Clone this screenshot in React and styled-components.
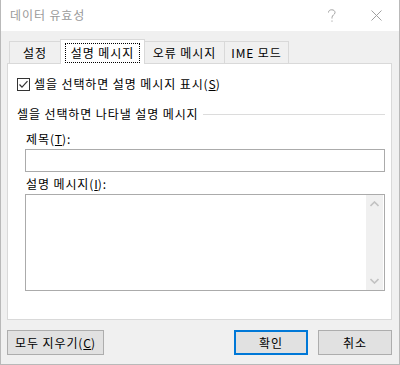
import styled, { createGlobalStyle } from "styled-components"

const GlobalStyle = createGlobalStyle`
    html, body {
        margin: 0;
        padding: 0;
        background: #ffffff;
    }
    body {
        font-family: "Noto Sans CJK KR", "Noto Sans", "Liberation Sans", sans-serif;
        font-size: 12px;
        letter-spacing: 0.9px;
        color: #000;
    }
`

const Window = styled.div`
    width: 400px;
    height: 365px;
    box-sizing: border-box;
    border: 1px solid #b9b9b9;
    border-top: none;
    display: flex;
    flex-direction: column;
    background: #f0f0f0;
`

const TitleBar = styled.div`
    height: 31px;
    background: #ffffff;
    display: flex;
    align-items: center;
    padding-left: 9px;
`

const Title = styled.div`
    flex: 1;
    color: #999999;
    font-size: 12px;
    line-height: 16px;
    margin-top: -2px;
`

const TitleButton = styled.div`
    width: 45px;
    height: 31px;
    display: flex;
    align-items: center;
    justify-content: center;
    color: #a0a0a0;
`

const Body = styled.div`
    flex: 1;
    display: flex;
    flex-direction: column;
    padding: 8px 7px 0 6px;
`

const TabStrip = styled.div`
    display: flex;
    align-items: flex-end;
    padding-left: 2px;
    height: 24px;
`

const Tab = styled.div`
    box-sizing: border-box;
    width: ${p => p.$w}px;
    height: ${p => (p.$active ? 25 : 22)}px;
    margin-left: ${p => (p.$first ? 0 : -1)}px;
    margin-bottom: ${p => (p.$active ? -1 : 0)}px;
    border: 1px solid #d9d9d9;
    border-bottom: none;
    background: ${p => (p.$active ? "#ffffff" : "#f0f0f0")};
    position: relative;
    z-index: ${p => (p.$active ? 1 : 0)};
    display: flex;
    align-items: ${p => (p.$active ? "flex-start" : "center")};
    justify-content: center;
    line-height: 16px;
    white-space: nowrap;
`

const FocusBox = styled.span`
    box-sizing: border-box;
    margin-top: 3px;
    width: 75px;
    height: 20px;
    border: 1px dotted #000;
    display: flex;
    align-items: center;
    justify-content: center;
`

const Panel = styled.div`
    box-sizing: border-box;
    height: 257px;
    background: #ffffff;
    border: 1px solid #d9d9d9;
    display: flex;
    flex-direction: column;
    padding: 0 6px 0 9px;
`

const CheckRow = styled.label`
    display: flex;
    align-items: center;
    margin-top: 13px;
    height: 14px;
    line-height: 16px;
`

const CheckBox = styled.span`
    box-sizing: border-box;
    width: 13px;
    height: 13px;
    border: 1px solid #333;
    margin-right: 4px;
    display: flex;
    align-items: center;
    justify-content: center;
`

const GroupHeader = styled.div`
    display: flex;
    align-items: center;
    margin-top: 15px;
    line-height: 16px;
    height: 16px;
`

const GroupLine = styled.div`
    flex: 1;
    height: 1px;
    background: #dcdcdc;
    margin-left: 4px;
`

const FieldLabel = styled.div`
    margin-left: 9px;
    margin-top: ${p => p.$top}px;
    line-height: 16px;
    height: 16px;
`

const TextBox = styled.div`
    box-sizing: border-box;
    margin: 2px 0 0 8px;
    height: ${p => p.$h}px;
    border: 1px solid #ababab;
    background: #ffffff;
    display: flex;
    justify-content: flex-end;
`

const ScrollBar = styled.div`
    width: 17px;
    margin: 0 1px 0 0;
    background: #f0f0f0;
    display: flex;
    flex-direction: column;
    justify-content: space-between;
    align-items: center;
    padding: 6px 0;
`

const Mn = styled.u`
    text-decoration: underline;
    text-underline-offset: 1px;
    letter-spacing: 0;
`

const ButtonRow = styled.div`
    display: flex;
    align-items: center;
    margin-top: 10px;
    gap: 10px;
`

const Button = styled.div`
    box-sizing: border-box;
    width: ${p => p.$w}px;
    height: 25px;
    background: #e1e1e1;
    border: ${p => (p.$default ? "2px solid #0078d7" : "1px solid #adadad")};
    display: flex;
    align-items: center;
    justify-content: center;
    line-height: 16px;
    white-space: nowrap;
`

const Spacer = styled.div`
    flex: 1;
`

const Chevron = ({ up }) => (
    <svg width="9" height="6" viewBox="0 0 9 6">
        <path
            d={up ? "M0.5 5 L4.5 1 L8.5 5" : "M0.5 1 L4.5 5 L8.5 1"}
            fill="none"
            stroke="#c2c2c2"
            strokeWidth="1.6"
        />
    </svg>
)

const App = () => {
    return (
        <>
            <GlobalStyle />
            <Window>
                <TitleBar>
                    <Title>데이터 유효성</Title>
                    <TitleButton>
                        <svg width="10" height="14" viewBox="0 0 10 14">
                            <path d="M1.5 3.5 C1.5 1.5 3 0.8 4.8 0.8 C6.8 0.8 8 2 8 3.6 C8 5.6 5 6 5 8.5 L5 9.5" fill="none" stroke="#a0a0a0" strokeWidth="1" />
                            <rect x="4.5" y="11.5" width="1" height="1.2" fill="#a0a0a0" />
                        </svg>
                    </TitleButton>
                    <TitleButton>
                        <svg width="11" height="11" viewBox="0 0 11 11">
                            <path d="M0.5 0.5 L10.5 10.5 M10.5 0.5 L0.5 10.5" stroke="#a0a0a0" strokeWidth="1" />
                        </svg>
                    </TitleButton>
                </TitleBar>
                <Body>
                    <TabStrip>
                        <Tab $first $w={52}>설정</Tab>
                        <Tab $active $w={85}>
                            <FocusBox>설명 메시지</FocusBox>
                        </Tab>
                        <Tab $w={81}>오류 메시지</Tab>
                        <Tab $w={65}>IME 모드</Tab>
                    </TabStrip>
                    <Panel>
                        <CheckRow>
                            <CheckBox>
                                <svg width="11" height="11" viewBox="0 0 11 11">
                                    <path d="M1.5 5.5 L4 8.2 L9.5 2.2" fill="none" stroke="#333" strokeWidth="1.2" />
                                </svg>
                            </CheckBox>
                            셀을 선택하면 설명 메시지 표시(<Mn>S</Mn>)
                        </CheckRow>
                        <GroupHeader>
                            셀을 선택하면 나타낼 설명 메시지
                            <GroupLine />
                        </GroupHeader>
                        <FieldLabel $top={9}>제목(<Mn>T</Mn>):</FieldLabel>
                        <TextBox $h={23} />
                        <FieldLabel $top={4}>설명 메시지(<Mn>I</Mn>):</FieldLabel>
                        <TextBox $h={97}>
                            <ScrollBar>
                                <Chevron up />
                                <Chevron />
                            </ScrollBar>
                        </TextBox>
                    </Panel>
                    <ButtonRow>
                        <Button $w={97}>모두 지우기(<Mn>C</Mn>)</Button>
                        <Spacer />
                        <Button $w={74} $default>확인</Button>
                        <Button $w={74}>취소</Button>
                    </ButtonRow>
                </Body>
            </Window>
        </>
    )
}

export default App
